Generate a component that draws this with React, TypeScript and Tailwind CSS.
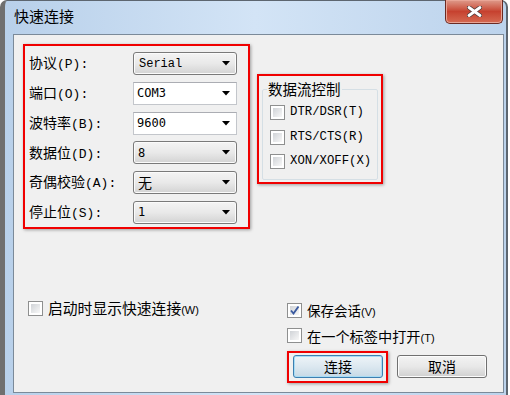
import React from 'react';

const cjk = "font-['Noto_Sans_CJK_SC',sans-serif]";
const mono = "font-['Liberation_Mono',monospace]";
const dmono = "font-['DejaVu_Sans_Mono',monospace]";

const Arrow = () => (
  <svg width="8" height="5" viewBox="0 0 8 5" className="ml-auto shrink-0">
    <polygon points="0,0 8,0 4,4.5" fill="#000" />
  </svg>
);

type ComboProps = { value: React.ReactNode; edit?: boolean };

const Combo: React.FC<ComboProps> = ({ value, edit }) => (
  <div
    className={
      edit
        ? 'w-[104px] h-[23px] flex items-center pl-[3px] pr-[6px] border border-[#c3c6cb] border-t-[#abadb3] bg-white'
        : 'w-[104px] h-[23px] flex items-center pl-[4px] pr-[6px] rounded-[3px] border border-[#7a7a7a] bg-gradient-to-b from-[#f4f4f4] via-[#e9e9e9] to-[#d3d3d3] shadow-[inset_0_0_0_1px_#fbfbfb]'
    }
  >
    {value}
    <Arrow />
  </div>
);

const Label = ({ zh, en }: { zh: string; en: string }) => (
  <div className="w-[104px] flex items-baseline text-black">
    <span className={`${cjk} text-[14px]`}>{zh}</span>
    <span className={`${mono} text-[13px]`}>{en}</span>
  </div>
);

const Check = ({ checked }: { checked?: boolean }) => (
  <div className="w-[15px] h-[15px] shrink-0 border border-[#8e8f8f] bg-white p-[2px]">
    <div className="w-full h-full bg-gradient-to-br from-[#d0d3d7] to-[#f8f8f8] relative">
      {checked && (
        <svg width="11" height="11" viewBox="0 0 11 11" className="absolute -left-px -top-px">
          <path d="M2 5.5 L4.5 8.5 L9.5 1.5" fill="none" stroke="#3a5aa0" strokeWidth="1.9" />
        </svg>
      )}
    </div>
  </div>
);

const rows: { zh: string; en: string; value: React.ReactNode; edit?: boolean }[] = [
  { zh: '协议', en: '(P):', value: <span className={`${mono} text-[12px] pl-[1px]`}>Serial</span> },
  { zh: '端口', en: '(O):', value: <span className={`${dmono} text-[12px]`}>COM3</span>, edit: true },
  { zh: '波特率', en: '(B):', value: <span className={`${dmono} text-[12px]`}>9600</span>, edit: true },
  { zh: '数据位', en: '(D):', value: <span className={`${dmono} text-[12px]`}>8</span> },
  { zh: '奇偶校验', en: '(A):', value: <span className={`${cjk} text-[14px]`}>无</span> },
  { zh: '停止位', en: '(S):', value: <span className={`${dmono} text-[12px]`}>1</span> },
];

const Btn = ({ children, def }: { children: React.ReactNode; def?: boolean }) => (
  <div
    className={
      def
        ? `w-[90px] h-[23px] flex items-center justify-center rounded-[3px] border border-[#3c7fb1] bg-gradient-to-b from-[#eef4f8] via-[#dce8f0] to-[#c6d9e6] shadow-[inset_0_0_0_1px_#a8dcf4] ${cjk} text-[14px] text-black`
        : `w-[90px] h-[23px] flex items-center justify-center rounded-[3px] border border-[#707070] bg-gradient-to-b from-[#f3f3f3] via-[#e8e8e8] to-[#d0d0d0] shadow-[inset_0_0_0_1px_#fcfcfc] ${cjk} text-[14px] text-black`
    }
  >
    {children}
  </div>
);

export default function App() {
  return (
    <div className="w-[510px] h-[395px] bg-white overflow-hidden">
      <div className="w-[508px] h-[395px] flex flex-col rounded-tl-[7px] rounded-tr-[7px] border-l-[5px] border-l-[#6f6f6f] border-r-[2px] border-r-[#5d6670] border-t border-t-[#5d6670] bg-gradient-to-r from-[#b8d0ea] via-[#d3e4f6] to-[#bcd3ec]">
        {/* title bar */}
        <div className="h-[33px] flex items-start shrink-0">
          <span className={`${cjk} text-[15px] text-black leading-[20px] pl-[9px] pt-[5px]`}>快速连接</span>
          <div className="ml-auto mr-[3px] -mt-px w-[58px] h-[24px] rounded-b-[5px] border border-[#6b2a22] border-t-0 bg-gradient-to-b from-[#dd9a8b] via-[#c6412f] to-[#d56a52] flex items-center justify-center shadow-[inset_0_0_0_1px_#e9a596]">
            <svg width="15" height="11" viewBox="0 0 15 11">
              <path d="M2 1.5 L13 9.5 M13 1.5 L2 9.5" stroke="#4a3a38" strokeWidth="4.4" strokeLinecap="round" />
              <path d="M2 1.5 L13 9.5 M13 1.5 L2 9.5" stroke="#fff" strokeWidth="2.8" strokeLinecap="round" />
            </svg>
          </div>
        </div>

        {/* client area */}
        <div className="ml-[8px] mr-[2px] mb-[2px] flex-1 border border-[#7b8a99] bg-[#f0f0f0] flex flex-col">
          <div className="flex items-start">
            <div className="ml-[9px] mt-[9px] w-[227px] h-[185px] border-2 border-[#f00000] shadow-[1px_1px_3px_rgba(0,0,0,0.35)] pl-[4px] pt-[6px] flex flex-col gap-[6.8px]">
              {rows.map((r) => (
                <div key={r.zh} className="flex items-center h-[23px]">
                  <Label zh={r.zh} en={r.en} />
                  <Combo value={r.value} edit={r.edit} />
                </div>
              ))}
            </div>

            <div className="ml-[7px] mt-[39px] w-[126px] h-[110px] border-2 border-[#f00000] shadow-[1px_1px_3px_rgba(0,0,0,0.35)] p-[3px] pt-[4px]">
              <fieldset className="h-[100px] border border-[#d5dfe5] rounded-[2px] pl-[4px]">
                <legend className={`${cjk} text-[14.5px] leading-[18px] text-black px-[1px]`}>数据流控制</legend>
                <div className="mt-[7px] pl-[3px] flex flex-col gap-[9.5px]">
                  {['DTR/DSR(T)', 'RTS/CTS(R)', 'XON/XOFF(X)'].map((t) => (
                    <div key={t} className="flex items-center h-[15px] gap-[5px]">
                      <Check />
                      <span className={`${mono} text-[12.3px] text-black`}>{t}</span>
                    </div>
                  ))}
                </div>
              </fieldset>
            </div>
          </div>

          <div className="mt-[71px] flex">
            <div className="w-[273px] pl-[14px]">
              <div className="flex items-center h-[16px] gap-[5px]">
                <Check />
                <span className="text-black">
                  <span className={`${cjk} text-[14.8px]`}>启动时显示快速连接</span>
                  <span className="font-['Liberation_Sans',sans-serif] text-[11px]">(W)</span>
                </span>
              </div>
            </div>
            <div className="flex flex-col pt-[2px]">
              <div className="flex items-center h-[16px] gap-[5px]">
                <Check checked />
                <span className="text-black">
                  <span className={`${cjk} text-[13.5px]`}>保存会话</span>
                  <span className="font-['Liberation_Sans',sans-serif] text-[11px]">(V)</span>
                </span>
              </div>
              <div className="mt-[9.5px] flex items-center h-[16px] gap-[5px]">
                <Check />
                <span className="text-black">
                  <span className={`${cjk} text-[14.2px]`}>在一个标签中打开</span>
                  <span className="font-['Liberation_Sans',sans-serif] text-[11px]">(T)</span>
                </span>
              </div>
              <div className="mt-[7.5px] flex items-start">
                <div className="w-[101px] h-[32px] border-2 border-[#f00000] shadow-[1px_1px_3px_rgba(0,0,0,0.35)] pt-[2px] pl-[4px]">
                  <Btn def>连接</Btn>
                </div>
                <div className="ml-[9px] mt-[4px]">
                  <Btn>取消</Btn>
                </div>
              </div>
            </div>
          </div>
        </div>
      </div>
    </div>
  );
}
